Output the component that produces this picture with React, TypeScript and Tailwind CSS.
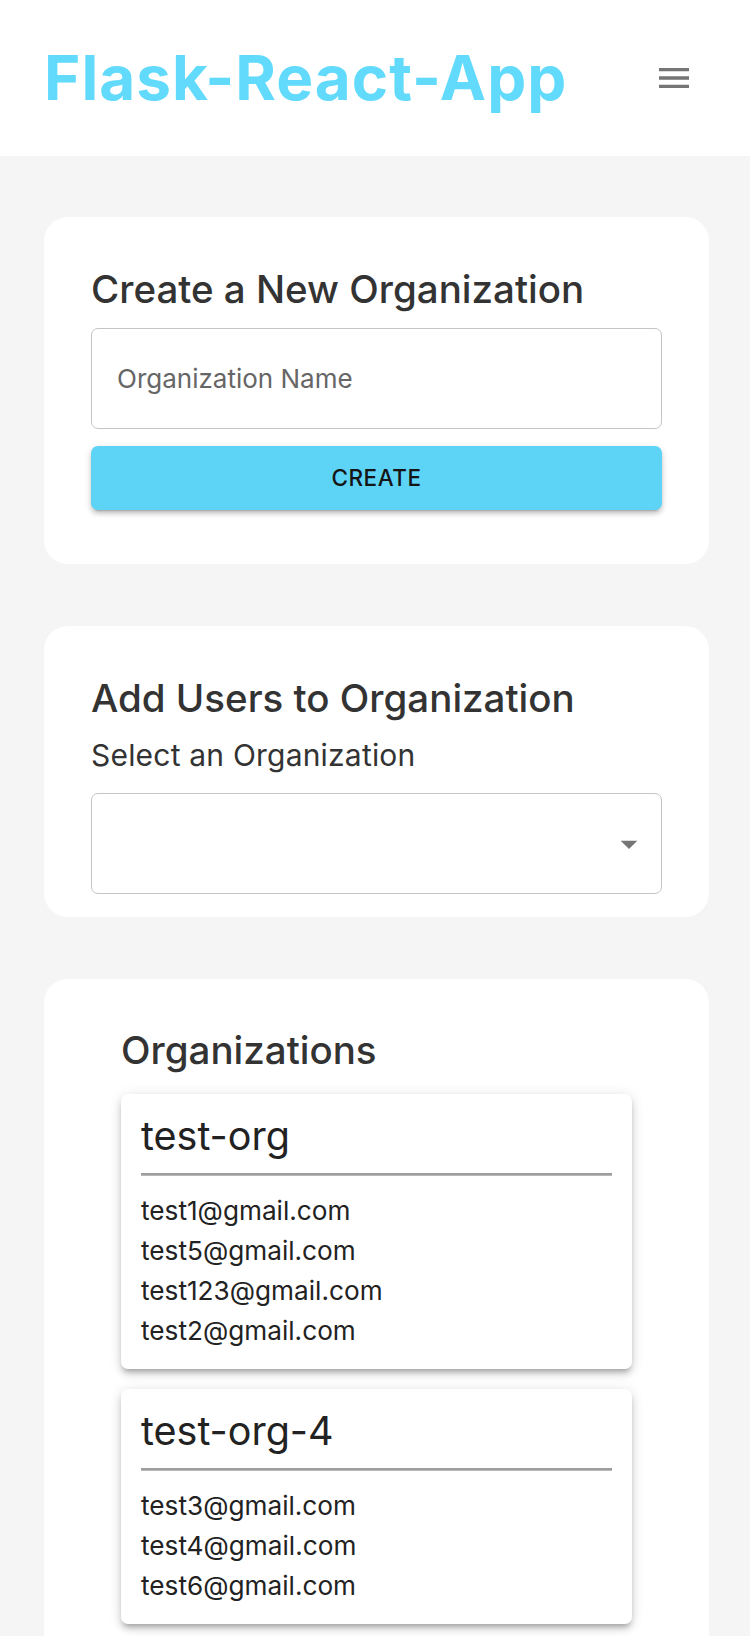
import React from "react";

const FONT = { fontFamily: 'Inter, "Noto Sans", Roboto, sans-serif' };

function MenuIcon() {
  return (
    <svg width="40" height="40" viewBox="0 0 24 24" fill="#757575" aria-hidden="true">
      <path d="M3 18h18v-2H3v2zm0-5h18v-2H3v2zm0-7v2h18V6H3z" />
    </svg>
  );
}

function ArrowDropDown() {
  return (
    <svg width="40" height="40" viewBox="0 0 24 24" fill="#757575" aria-hidden="true">
      <path d="M7 10l5 5 5-5z" />
    </svg>
  );
}

const orgs = [
  { name: "test-org", users: ["test1@gmail.com", "test5@gmail.com", "test123@gmail.com", "test2@gmail.com"] },
  { name: "test-org-4", users: ["test3@gmail.com", "test4@gmail.com", "test6@gmail.com"] },
];

export default function App() {
  return (
    <div className="min-h-screen bg-[#f5f5f5]" style={FONT}>
      <header className="h-[156px] bg-white flex items-center justify-between pl-[44px] pr-[56px]">
        <h1 className="text-[62px] leading-none font-bold text-[#61dafb] tracking-[1px]">Flask-React-App</h1>
        <MenuIcon />
      </header>

      <main className="pl-[44px] pr-[41px] pt-[61px] pb-[80px] flex flex-col gap-[62px]">
        {/* Card 1 */}
        <section className="bg-white rounded-[24px] pt-[50px] pb-[54px] px-[47px] flex flex-col">
          <h2 className="text-[38.5px] leading-[44px] font-medium text-[#333333]">Create a New Organization</h2>
          <div className="mt-[17px] h-[101px] rounded-[7px] border border-[#c4c4c4] flex items-center px-[25px]">
            <input
              className="w-full outline-none bg-transparent text-[26px] text-[#333] placeholder:text-[#666666]"
              placeholder="Organization Name"
            />
          </div>
          <button className="mt-[17px] h-[64px] rounded-[7px] bg-[#5dd3f6] text-[22.5px] font-medium text-[#151515] tracking-[0.5px] shadow-[0px_5px_2px_-4px_rgba(0,0,0,0.2),0px_4px_4px_0px_rgba(0,0,0,0.14),0px_2px_9px_0px_rgba(0,0,0,0.12)]">
            CREATE
          </button>
        </section>

        {/* Card 2 */}
        <section className="bg-white rounded-[24px] pt-[50px] pb-[23px] px-[47px] flex flex-col">
          <h2 className="text-[38.5px] leading-[44px] font-medium text-[#333333]">Add Users to Organization</h2>
          <div className="mt-[19px] text-[30px] leading-[32px] tracking-[0.2px] text-[#333333]">Select an Organization</div>
          <div className="mt-[22px] h-[101px] rounded-[7px] border border-[#c4c4c4] flex items-center justify-end pr-[12px]">
            <ArrowDropDown />
          </div>
        </section>

        {/* Card 3 */}
        <section className="bg-white rounded-[24px] pt-[49px] pb-[40px] px-[77px] flex flex-col">
          <h2 className="text-[38.5px] leading-[44px] font-medium text-[#333333]">Organizations</h2>
          <div className="mt-[22px] flex flex-col gap-[20px]">
            {orgs.map((o) => (
              <div
                key={o.name}
                className="bg-white rounded-[7px] px-[20px] pt-[20px] pb-[18px] shadow-[0px_5px_5px_-3px_rgba(0,0,0,0.2),0px_5px_7px_0px_rgba(0,0,0,0.14),0px_2px_14px_0px_rgba(0,0,0,0.12)]"
              >
                <div className="text-[39.5px] leading-[44px] text-[#222222]">{o.name}</div>
                <div className="mt-[15px] h-[3px] bg-[#b8b8b8] border-t-2 border-[#9e9e9e]" />
                <div className="mt-[15px] flex flex-col">
                  {o.users.map((u) => (
                    <div key={u} className="text-[26.2px] leading-[40px] text-[#222222]">
                      {u}
                    </div>
                  ))}
                </div>
              </div>
            ))}
          </div>
        </section>
      </main>
    </div>
  );
}
